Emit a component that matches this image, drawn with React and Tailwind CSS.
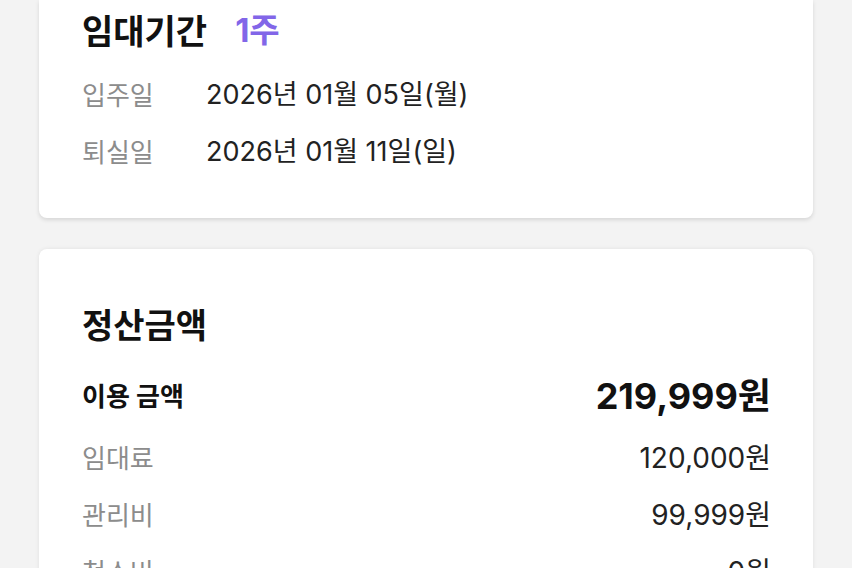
import React from "react";

const font = { fontFamily: '"Inter", "Noto Sans CJK KR", sans-serif' };

const Row = ({ label, value }) => (
  <div className="flex items-center h-[36px]">
    <span className="w-[124px] text-[26px] text-[#8c8c8c]">{label}</span>
    <span className="text-[27px] text-[#222]">{value}</span>
  </div>
);

const PriceRow = ({ label, value }) => (
  <div className="flex items-center justify-between h-[36px]">
    <span className="text-[26px] text-[#8c8c8c]">{label}</span>
    <span className="text-[28px] text-[#222]">{value}</span>
  </div>
);

export default function App() {
  return (
    <div className="min-h-screen bg-[#f3f3f3] px-[39px]" style={font}>
      <div className="bg-white rounded-b-lg shadow-[0_2px_4px_rgba(0,0,0,0.12)] pl-[43px] pr-[42px] pt-[11px] pb-[48px]">
        <div className="flex items-center h-[40px] gap-[28px]">
          <h2 className="text-[34px] font-bold text-[#111]">임대기간</h2>
          <span className="text-[33px] font-bold text-[#8266e8]">1주</span>
        </div>
        <div className="mt-[26px] flex flex-col gap-[21px]">
          <Row label="입주일" value="2026년 01월 05일(월)" />
          <Row label="퇴실일" value="2026년 01월 11일(일)" />
        </div>
      </div>

      <div className="mt-[31px] bg-white rounded-t-lg shadow-[0_0_4px_rgba(0,0,0,0.08)] pl-[43px] pr-[42px] pt-[56px] pb-[40px]">
        <h2 className="h-[40px] flex items-center text-[34px] font-bold text-[#111]">정산금액</h2>
        <div className="mt-[33px] flex items-center justify-between h-[36px]">
          <span className="text-[26px] font-bold text-[#111]">이용 금액</span>
          <span className="text-[36px] font-bold text-[#111]">219,999원</span>
        </div>
        <div className="mt-[26px] flex flex-col gap-[21px]">
          <PriceRow label="임대료" value="120,000원" />
          <PriceRow label="관리비" value="99,999원" />
          <PriceRow label="청소비" value="0원" />
        </div>
      </div>
    </div>
  );
}
